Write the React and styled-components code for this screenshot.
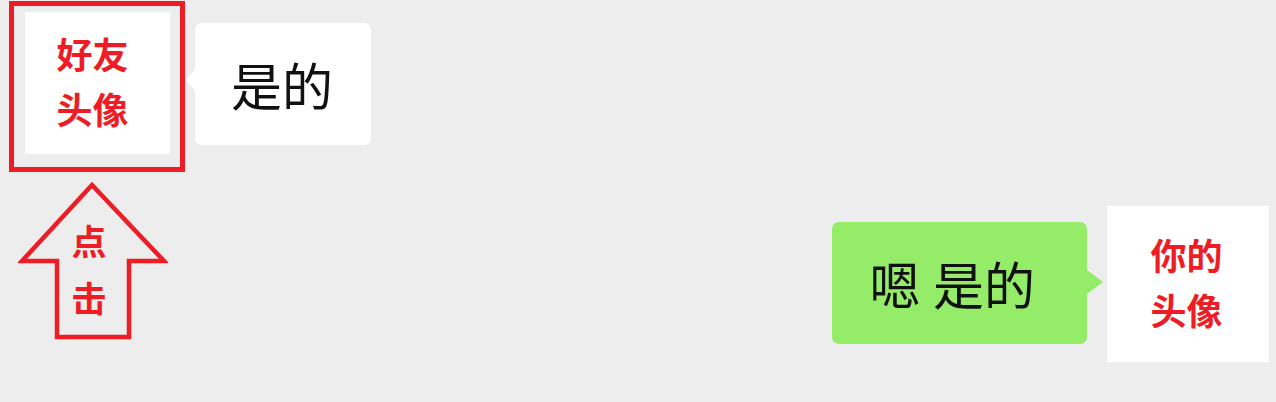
import React from 'react'
import styled, { createGlobalStyle } from 'styled-components'

const GlobalStyle = createGlobalStyle`
  html, body {
    margin: 0;
    padding: 0;
    background: #ededed;
  }
  body {
    font-family: "Noto Sans CJK SC", "Noto Sans", sans-serif;
  }
`

const red = '#ee1c25'

const Page = styled.div`
  position: relative;
  width: 1276px;
  height: 402px;
  box-sizing: border-box;
  padding: 1px 7px 0 9px;
  display: flex;
  flex-direction: column;
`

const Row = styled.div`
  display: flex;
  align-items: flex-start;
  justify-content: ${props => (props.mine ? 'flex-end' : 'flex-start')};
  margin-top: ${props => props.offset || 0}px;
`

const Highlight = styled.div`
  border: 5px solid ${red};
  padding: 6px 10px 13px 11px;
`

const Avatar = styled.div`
  width: ${props => props.w}px;
  height: ${props => props.h}px;
  box-sizing: border-box;
  padding-right: ${props => props.shift || 0}px;
  padding-bottom: ${props => props.lift || 0}px;
  background: #fff;
  display: flex;
  flex-direction: column;
  align-items: center;
  justify-content: center;
  color: ${red};
  font-weight: 700;
  font-size: 36px;
  line-height: 55px;
`

const Bubble = styled.div`
  position: relative;
  height: 122px;
  box-sizing: border-box;
  padding: 0 ${props => props.padRight}px 0 ${props => props.padLeft}px;
  display: flex;
  align-items: center;
  border-radius: 7px;
  background: ${props => (props.mine ? '#95ec69' : '#fff')};
  color: #111;
  font-size: 51px;
  white-space: pre;
  word-spacing: 1px;
  margin: ${props => (props.mine ? '16px 20px 0 0' : '22px 0 0 10px')};

  &::before {
    content: '';
    position: absolute;
    border-style: solid;
    ${props =>
      props.mine
        ? `top: 48px; right: -16px;
           border-width: 12px 0 12px 16px;
           border-color: transparent transparent transparent #95ec69;`
        : `top: 46px; left: -9px;
           border-width: 11px 9px 11px 0;
           border-color: transparent #fff transparent transparent;`}
  }
`

const ArrowMark = styled.div`
  position: absolute;
  left: 18px;
  top: 180px;
  width: 150px;
  height: 162px;
`

const ArrowSvg = styled.svg`
  position: absolute;
  left: 0;
  top: 0;
`

const ArrowLabel = styled.div`
  position: relative;
  padding-top: 31px;
  display: flex;
  flex-direction: column;
  align-items: center;
  margin-left: -8px;
  color: ${red};
  font-weight: 700;
  font-size: 35px;
  line-height: 57px;
`

export default function App() {
  return (
    <>
      <GlobalStyle />
      <Page>
        <Row>
          <Highlight>
            <Avatar w={145} h={142} shift={10} lift={4}>
              <span>好友</span>
              <span>头像</span>
            </Avatar>
          </Highlight>
          <Bubble padLeft={36} padRight={38}>是的</Bubble>
        </Row>
        <Row mine offset={34}>
          <Bubble mine padLeft={38} padRight={52}>嗯 是的</Bubble>
          <Avatar w={162} h={156} shift={3} lift={5}>
            <span>你的</span>
            <span>头像</span>
          </Avatar>
        </Row>
        <ArrowMark>
          <ArrowSvg width="150" height="162" viewBox="18 180 150 162">
            <polygon
              points="92,185 22,261 57,261 57,337 129,337 129,261 164,261"
              fill="none"
              stroke={red}
              strokeWidth="4.5"
              strokeLinejoin="miter"
            />
          </ArrowSvg>
          <ArrowLabel>
            <span>点</span>
            <span>击</span>
          </ArrowLabel>
        </ArrowMark>
      </Page>
    </>
  )
}
